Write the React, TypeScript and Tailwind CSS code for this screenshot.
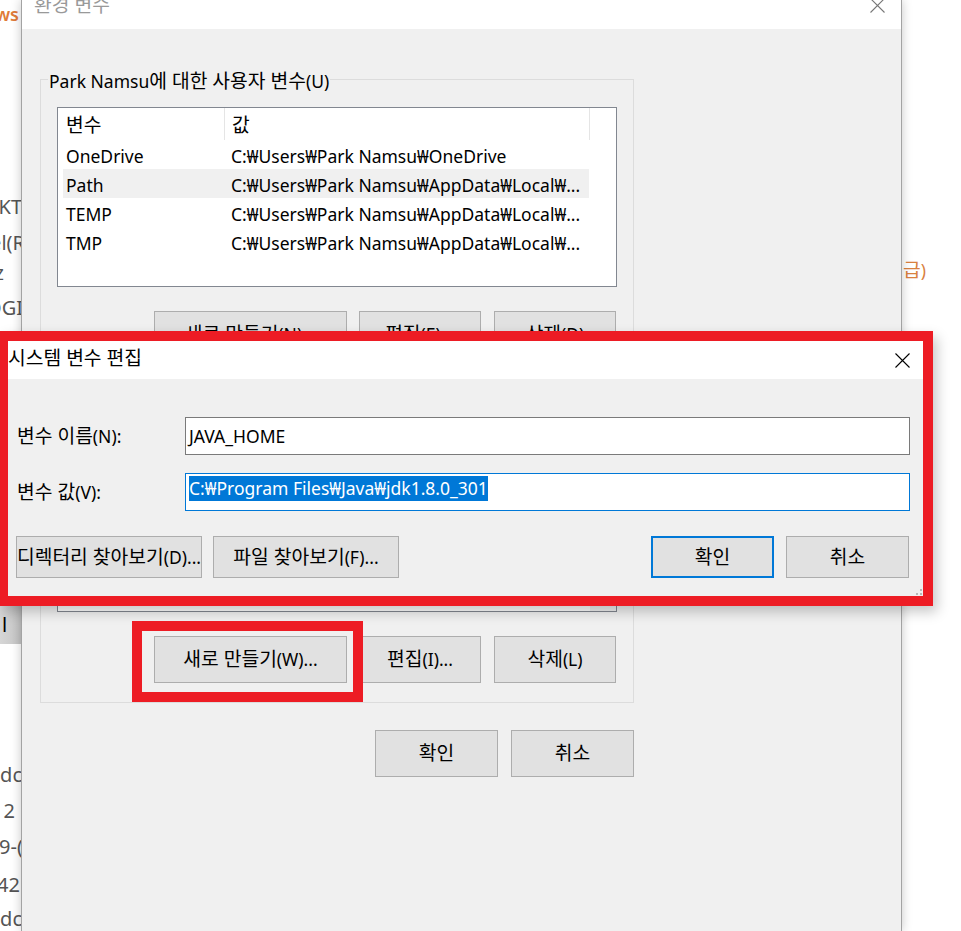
import React from "react";

type Row = [string, string];

const userVars: Row[] = [
  ["OneDrive", "C:₩Users₩Park Namsu₩OneDrive"],
  ["Path", "C:₩Users₩Park Namsu₩AppData₩Local₩..."],
  ["TEMP", "C:₩Users₩Park Namsu₩AppData₩Local₩..."],
  ["TMP", "C:₩Users₩Park Namsu₩AppData₩Local₩..."],
];

const systemVars: Row[] = [
  ["ComSpec", "C:₩WINDOWS₩system32₩cmd.exe"],
  ["DriverData", "C:₩Windows₩System32₩Drivers₩DriverData"],
  ["JAVA_HOME", "C:₩Program Files₩Java₩jdk1.8.0_301"],
  ["NUMBER_OF_PROCESSORS", "8"],
  ["OS", "Windows_NT"],
  ["CommonProgramFiles(x86)", "C:₩Program Files (x86)₩Common Files"],
  ["Path", "C:₩Program Files₩Common Files₩Oracle₩Java₩..."],
];

// Malgun Gothic draws hangul bigger than its latin, so hangul runs get a bump
const HANGUL = /([\u3131-\uD7A3]+(?: [\u3131-\uD7A3]+)*)/;

const K = ({ children }: { children: string }) => (
  <>
    {children.split(HANGUL).map((part, i) =>
      i % 2 === 1 ? (
        <span key={i} className="text-[1.1em]">
          {part}
        </span>
      ) : (
        part
      )
    )}
  </>
);

const CloseIcon = ({ className }: { className?: string }) => (
  <svg viewBox="0 0 15 15" className={className} fill="none" stroke="currentColor" strokeWidth="1.1">
    <path d="M0.5 0.5L14.5 14.5M14.5 0.5L0.5 14.5" />
  </svg>
);

const Btn = ({ label, className = "" }: { label: string; className?: string }) => (
  <button
    type="button"
    className={`flex shrink-0 items-center justify-center whitespace-nowrap bg-[#e1e1e1] text-black ${className}`}
  >
    <K>{label}</K>
  </button>
);

const VarList = ({
  rows,
  selected,
  className = "",
  scroll,
  scrollTop = "",
}: {
  rows: Row[];
  selected?: number;
  className?: string;
  scroll?: boolean;
  scrollTop?: string;
}) => (
  <div className={`flex overflow-hidden border border-[#828790] bg-white ${className}`}>
    <div className="flex flex-1 flex-col overflow-hidden">
      <div className="flex h-[32px] shrink-0">
        <div className="flex w-[167px] items-center border-r border-[#e5e5e5] pl-[8px] pt-[3px]">
          <K>변수</K>
        </div>
        <div className="flex w-[365px] items-center border-r border-[#e5e5e5] pl-[7px] pt-[3px]">
          <K>값</K>
        </div>
      </div>
      <div className="flex-1 overflow-hidden">
        <div className={scrollTop}>
          {rows.map(([name, value], i) => (
            <div
              key={name + i}
              className={`ml-[5px] flex h-[29px] w-[526px] items-center whitespace-nowrap pt-[4px] ${i === selected ? "bg-[#f0f0f0]" : ""}`}
            >
              <div className="w-[161px] truncate pl-[3px]">{name}</div>
              <div className="flex-1 overflow-hidden pl-[7px]">{value}</div>
            </div>
          ))}
        </div>
      </div>
    </div>
    {scroll && <div className="w-[26px] bg-[#f0f0f0]" />}
  </div>
);

const Group = ({ label, children, className = "" }: { label: string; children: React.ReactNode; className?: string }) => (
  <div className={`relative ml-[18px] w-[594px] border border-[#dcdcdc] px-[16px] pt-[27px] pb-[19px] ${className}`}>
    <span className="absolute left-[7px] top-[-11px] whitespace-nowrap bg-[#f0f0f0] px-[1px] leading-[24px]">
      <K>{label}</K>
    </span>
    {children}
  </div>
);

const GroupButtons = ({ labels }: { labels: [string, string, string] }) => (
  <div className="mt-[24px] flex h-[47px] justify-end pr-[1px]">
    <Btn label={labels[0]} className="w-[193px] border border-[#adadad]" />
    <Btn label={labels[1]} className="ml-[12px] w-[122px] border border-[#adadad]" />
    <Btn label={labels[2]} className="ml-[13px] w-[122px] border border-[#adadad]" />
  </div>
);

const LeftStrip = () => (
  <div className="flex w-[21px] shrink-0 flex-col overflow-hidden bg-white text-[20px] leading-[24px] text-[#555]">
    <div className="mt-[2px] flex justify-end whitespace-nowrap pr-[2px] text-[18px] font-semibold text-[#e07b39]">Windows</div>
    <div className="mt-[169px] flex justify-end whitespace-nowrap">
      <span className="-mr-[1px]">SKT</span>
    </div>
    <div className="mt-[12px] flex justify-end whitespace-nowrap">
      <span className="-mr-[4px]">Intel(R</span>
    </div>
    <div className="mt-[6px] flex justify-end whitespace-nowrap">
      <span className="mr-[17px]">Hz</span>
    </div>
    <div className="mt-[11px] flex justify-end whitespace-nowrap">
      <span className="-mr-[2px]">LOGI</span>
    </div>
    <div className="mt-[286px] flex h-[40px] items-center bg-gradient-to-r from-[#d6d6d6] to-[#c4c4c4] pl-[2px] text-black">l</div>
    <div className="mt-[119px] flex justify-end whitespace-nowrap">
      <span className="-mr-[1px]">dc</span>
    </div>
    <div className="mt-[12px] flex justify-end whitespace-nowrap">
      <span className="mr-[6px]">212</span>
    </div>
    <div className="mt-[12px] flex justify-end whitespace-nowrap">
      <span className="-mr-[2px]">19-(</span>
    </div>
    <div className="mt-[14px] flex justify-end whitespace-nowrap">
      <span className="mr-[1px]">142</span>
    </div>
    <div className="mt-[10px] flex justify-end whitespace-nowrap">
      <span className="-mr-[1px]">dc</span>
    </div>
  </div>
);

const EnvWindow = () => (
  <div className="relative z-10 flex w-[881px] shrink-0 flex-col border-x border-[#a3a3a3] shadow-[0_0_10px_rgba(0,0,0,0.22)]">
    <div className="flex h-[29px] items-start justify-between bg-white">
      <span className="-mt-[7px] pl-[12px] leading-[24px] text-[#999]">
        <K>환경 변수</K>
      </span>
      <CloseIcon className="-mt-[2px] mr-[16px] h-[15px] w-[15px] text-[#777]" />
    </div>
    <div className="flex-1 bg-[#f0f0f0] pt-[50px]">
      <Group label="Park Namsu에 대한 사용자 변수(U)">
        <VarList rows={userVars} selected={1} className="h-[180px]" />
        <GroupButtons labels={["새로 만들기(N)...", "편집(E)...", "삭제(D)"]} />
      </Group>
      <Group label="시스템 변수(S)" className="mt-[18px]">
        <VarList rows={systemVars} selected={2} className="h-[188px]" scroll scrollTop="-mt-[25px]" />
        <GroupButtons labels={["새로 만들기(W)...", "편집(I)...", "삭제(L)"]} />
      </Group>
      <div className="ml-[18px] mt-[27px] flex h-[47px] w-[594px] justify-end gap-[13px]">
        <Btn label="확인" className="w-[123px] border border-[#adadad]" />
        <Btn label="취소" className="w-[123px] border border-[#adadad]" />
      </div>
    </div>
  </div>
);

const RightStrip = () => (
  <div className="flex flex-1 flex-col bg-white leading-[24px] text-[#d9813f]">
    <div className="ml-[1px] mt-[258px] whitespace-nowrap">
      <K>급)</K>
    </div>
  </div>
);

const EditDialog = () => (
  <div className="absolute left-0 top-[331px] z-20 flex h-[275px] w-[933px] flex-col border-y-[10px] border-l-[8px] border-r-[10px] border-[#ed1c24] shadow-[4px_6px_12px_rgba(0,0,0,0.22)]">
    <div className="flex h-[38px] shrink-0 items-center justify-between bg-white pb-[3px]">
      <span className="whitespace-nowrap">
        <K>시스템 변수 편집</K>
      </span>
      <CloseIcon className="mr-[13px] mt-[3px] h-[15px] w-[15px] text-black" />
    </div>
    <div className="relative flex flex-1 flex-col bg-[#f0f0f0] pt-[38px]">
      <div className="flex h-[38px] items-center">
        <span className="w-[177px] whitespace-nowrap pl-[9px]">
          <K>변수 이름(N):</K>
        </span>
        <div className="flex h-full w-[725px] items-center border border-[#7a7a7a] bg-white pl-[3px]">JAVA_HOME</div>
      </div>
      <div className="mt-[18px] flex h-[38px] items-center">
        <span className="w-[177px] whitespace-nowrap pl-[9px]">
          <K>변수 값(V):</K>
        </span>
        <div className="flex h-full w-[725px] items-start border border-[#0078d7] bg-white pl-[3px] pt-[2px]">
          <span className="h-[25px] whitespace-nowrap bg-[#0078d7] leading-[25px] text-white">C:₩Program Files₩Java₩jdk1.8.0_301</span>
        </div>
      </div>
      <div className="mt-[25px] flex h-[42px]">
        <Btn label="디렉터리 찾아보기(D)..." className="ml-[8px] w-[186px] border border-[#adadad]" />
        <Btn label="파일 찾아보기(F)..." className="ml-[11px] w-[186px] border border-[#adadad]" />
        <Btn label="확인" className="ml-auto w-[123px] border-2 border-[#0078d7]" />
        <Btn label="취소" className="ml-[12px] mr-[14px] w-[123px] border border-[#adadad]" />
      </div>
      <svg viewBox="0 0 6 6" className="absolute bottom-[1px] right-[1px] h-[6px] w-[6px]" fill="#b8b8b8">
        <rect x="4" y="0" width="2" height="2" />
        <rect x="0" y="4" width="2" height="2" />
        <rect x="4" y="4" width="2" height="2" />
      </svg>
    </div>
  </div>
);

export default function App() {
  return (
    <div className="relative flex h-[931px] w-[961px] overflow-hidden bg-white font-['Noto_Sans','Noto_Sans_CJK_KR',sans-serif] text-[17.5px] text-black">
      <LeftStrip />
      <EnvWindow />
      <RightStrip />
      <EditDialog />
      <div className="absolute left-[132px] top-[621px] z-20 h-[81px] w-[231px] border-[10px] border-[#ed1c24]" />
    </div>
  );
}
